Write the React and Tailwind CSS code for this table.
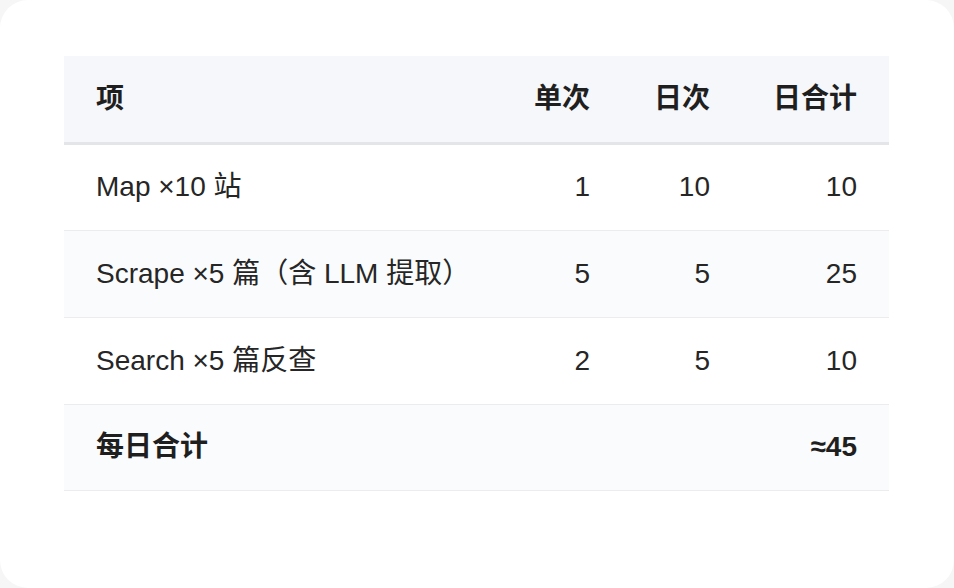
export default function App() {
  const rows = [
    { name: 'Map ×10 站', unit: '1', times: '10', total: '10' },
    { name: 'Scrape ×5 篇（含 LLM 提取）', unit: '5', times: '5', total: '25' },
    { name: 'Search ×5 篇反查', unit: '2', times: '5', total: '10' },
  ];

  return (
    <div className="w-[954px] h-[588px] bg-[#f6f6f7]" style={{ fontFamily: '"Liberation Sans", "Noto Sans CJK SC", sans-serif' }}>
      <div className="w-full h-full bg-white rounded-[28px] pt-[56px] px-[64px]">
        <table className="w-[825px] border-collapse table-fixed text-[28px] text-[#262626]">
          <colgroup>
            <col className="w-[438px]" />
            <col className="w-[120px]" />
            <col className="w-[120px]" />
            <col className="w-[147px]" />
          </colgroup>
          <thead>
            <tr className="bg-[#f6f7fa] border-b-[3px] border-[#e3e5e9] h-[87px]">
              <th className="text-left font-bold pl-[32px] text-[#1f1f1f]">项</th>
              <th className="text-right font-bold pr-[32px] text-[#1f1f1f]">单次</th>
              <th className="text-right font-bold pr-[32px] text-[#1f1f1f]">日次</th>
              <th className="text-right font-bold pr-[32px] text-[#1f1f1f]">日合计</th>
            </tr>
          </thead>
          <tbody>
            {rows.map((r, i) => (
              <tr key={i} className={`h-[87px] border-b border-[#ececee] ${i % 2 === 1 ? 'bg-[#fafbfc]' : 'bg-white'}`}>
                <td className="pl-[32px]">{r.name}</td>
                <td className="text-right pr-[32px]">{r.unit}</td>
                <td className="text-right pr-[32px]">{r.times}</td>
                <td className="text-right pr-[32px]">{r.total}</td>
              </tr>
            ))}
            <tr className="h-[86px] border-b border-[#ececee] bg-[#fafbfc] font-bold text-[#1f1f1f]">
              <td className="pl-[32px]">每日合计</td>
              <td></td>
              <td></td>
              <td className="text-right pr-[32px]">≈45</td>
            </tr>
          </tbody>
        </table>
      </div>
    </div>
  );
}
